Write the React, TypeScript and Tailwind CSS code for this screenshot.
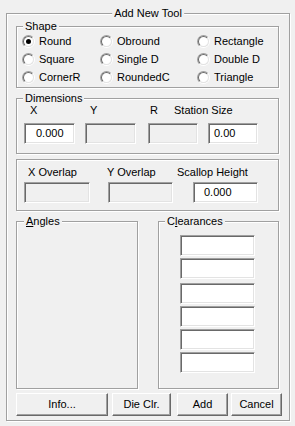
import React from 'react';

const shapes = [
  ['Round', 'Obround', 'Rectangle'],
  ['Square', 'Single D', 'Double D'],
  ['CornerR', 'RoundedC', 'Triangle'],
];

const etched = 'relative border border-[#a0a0a0] shadow-[inset_1px_1px_0_#fff,1px_1px_0_#fff]';
const sunken =
  'border border-t-[#a0a0a0] border-l-[#a0a0a0] border-b-white border-r-white shadow-[inset_1px_1px_0_#696969,inset_-1px_-1px_0_#e3e3e3]';
const button =
  'h-[23px] border border-t-white border-l-white border-b-[#696969] border-r-[#696969] shadow-[inset_-1px_-1px_0_#a0a0a0] bg-[#f0f0f0] text-[11px] leading-[13px] text-black';

function Legend({ children, className = 'left-[6px]' }: { children: React.ReactNode; className?: string }) {
  return (
    <span className={`absolute -top-[7px] ${className} px-[2px] bg-[#f0f0f0] leading-[13px] whitespace-nowrap`}>
      {children}
    </span>
  );
}

function Radio({ label, checked }: { label: string; checked?: boolean }) {
  return (
    <div className="flex items-center h-[18px]">
      <span className="w-[13px] h-[13px] rounded-full border border-t-[#a0a0a0] border-l-[#a0a0a0] border-b-white border-r-white flex">
        <span className="flex-1 rounded-full border border-t-[#696969] border-l-[#696969] border-b-[#e3e3e3] border-r-[#e3e3e3] bg-white flex items-center justify-center">
          {checked && <span className="w-[5px] h-[5px] rounded-full bg-black" />}
        </span>
      </span>
      <span className="ml-[4px] leading-[13px]">{label}</span>
    </div>
  );
}

function Field({ value, width, pad = 0, enabled }: { value?: string; width: number; pad?: number; enabled?: boolean }) {
  return (
    <div
      className={`${sunken} h-[21px] flex items-center ${enabled ? 'bg-white' : 'bg-[#f0f0f0]'}`}
      style={{ width, paddingLeft: pad }}
    >
      {value}
    </div>
  );
}

export default function App() {
  return (
    <div className="w-[295px] h-[426px] bg-[#f0f0f0] pt-[13px] px-[6px] text-[11px] text-black font-['Liberation_Sans',Arial,sans-serif] overflow-hidden">
      <div className={`${etched} w-[284px] h-[408px] pl-[9px]`}>
        <Legend className="left-1/2 -translate-x-1/2">Add New Tool</Legend>

        <div className={`${etched} mt-[12px] w-[263px] h-[62px] pt-[5px] pl-[5px]`}>
          <Legend>Shape</Legend>
          <div className="grid grid-cols-[78px_97px_auto]">
            {shapes.flat().map((s) => (
              <Radio key={s} label={s} checked={s === 'Round'} />
            ))}
          </div>
        </div>

        <div className={`${etched} mt-[10px] w-[263px] h-[56px] pt-[5px]`}>
          <Legend>Dimensions</Legend>
          <div className="flex pl-[13px] leading-[13px]">
            <span className="w-[60px]">X</span>
            <span className="w-[60px]">Y</span>
            <span className="w-[24px]">R</span>
            <span>Station Size</span>
          </div>
          <div className="grid grid-cols-[61px_63px_60px_50px] pl-[7px] mt-[6px]">
            <Field value="0.000" width={51} pad={11} enabled />
            <Field width={51} />
            <Field width={50} />
            <Field value="0.00" width={50} pad={5} enabled />
          </div>
        </div>

        <div className={`${etched} mt-[5px] w-[263px] h-[52px] pt-[6px]`}>
          <div className="flex pl-[11px] leading-[13px]">
            <span className="w-[79px]">X Overlap</span>
            <span className="w-[70px]">Y Overlap</span>
            <span>Scallop Height</span>
          </div>
          <div className="grid grid-cols-[84px_85px_65px] pl-[7px] mt-[3px]">
            <Field width={66} />
            <Field width={65} />
            <Field value="0.000" width={65} pad={10} enabled />
          </div>
        </div>

        <div className="flex mt-[10px] gap-[20px]">
          <div className={`${etched} w-[122px] h-[168px]`}>
            <Legend className="left-[7px]">
              <u>A</u>ngles
            </Legend>
          </div>
          <div className={`${etched} w-[121px] h-[168px] pt-[13px] pl-[21px]`}>
            <Legend className="left-[6px]">
              C<u>l</u>earances
            </Legend>
            <div className="flex flex-col">
              <Field width={75} enabled />
              <div className="mt-[2px]"><Field width={75} enabled /></div>
              <div className="mt-[4px]"><Field width={75} enabled /></div>
              <div className="mt-[2px]"><Field width={75} enabled /></div>
              <div className="mt-[2px]"><Field width={75} enabled /></div>
              <div className="mt-[2px]"><Field width={75} enabled /></div>
            </div>
          </div>
        </div>

        <div className="flex mt-[4px]">
          <button className={`${button} w-[92px]`}>Info...</button>
          <button className={`${button} w-[59px] ml-[4px]`}>Die Clr.</button>
          <button className={`${button} w-[51px] ml-[6px]`}>Add</button>
          <button className={`${button} w-[51px] ml-[3px]`}>Cancel</button>
        </div>
      </div>
    </div>
  );
}
